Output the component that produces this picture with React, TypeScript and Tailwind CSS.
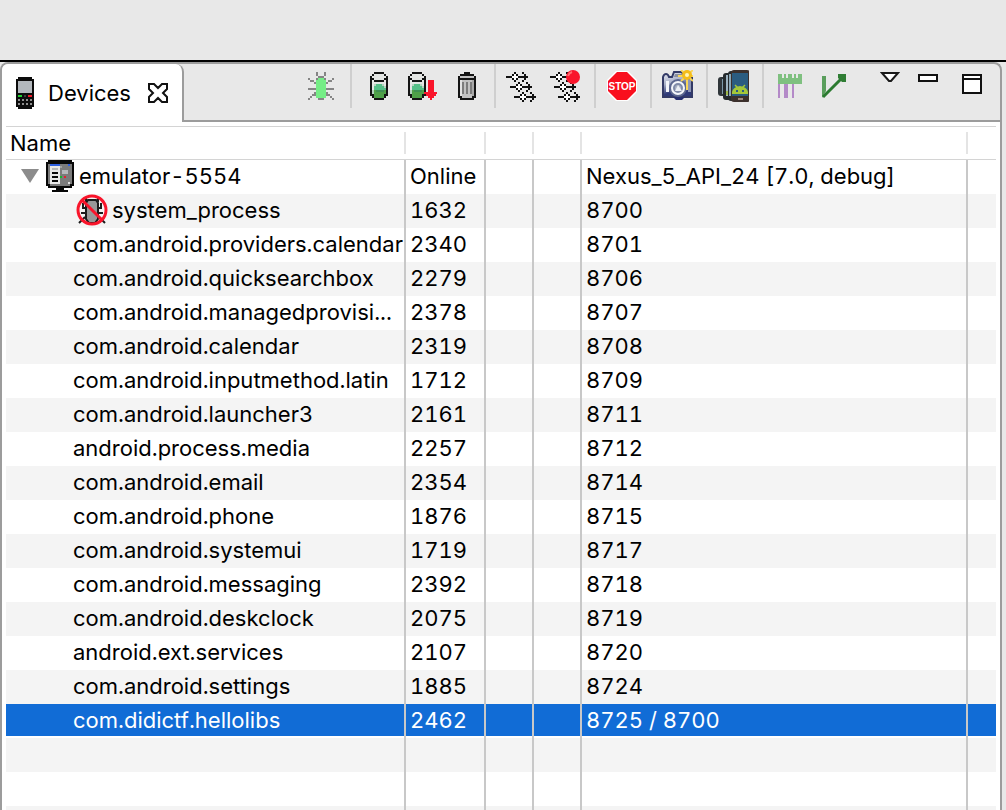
import type { ReactNode } from "react";

type Palette = Record<string, string>;

/* Draws a bitmap icon from rows of characters; every cell is 2x2 pixels. */
function Bitmap({ rows, colors, x = 0, y = 0 }: { rows: string[]; colors: Palette; x?: number; y?: number }) {
  return (
    <g transform={`translate(${x} ${y})`} shapeRendering="crispEdges">
      {rows.map((row, r) =>
        row.split("").map((c, i) =>
          colors[c] ? <rect key={`${r}-${i}`} x={i * 2} y={r * 2} width={2} height={2} fill={colors[c]} /> : null,
        ),
      )}
    </g>
  );
}

function Icon({ children }: { children: ReactNode }) {
  return (
    <svg viewBox="0 0 32 32" className="block size-8 shrink-0" aria-hidden="true">
      {children}
    </svg>
  );
}

const bug = [
  "....g...g....",
  "....g...g....",
  ".....ggg.....",
  "g...gGGGg...g",
  ".gg.GGGGG.gg.",
  "...gGGGGGg...",
  "....GGGGG....",
  "....GGGGG....",
  "ggggGGGGGgggg",
  "....GGGGG....",
  "...gGGGGGg...",
  "..ggGGGGGgg..",
  ".g..GGGGG..g.",
  "g....ggg....g",
];

const cylinder = [
  "..kkkkk..",
  ".kwwwwwk.",
  "kwwwwwwwk",
  "kkwwwwwkk",
  "kwkkkkkwk",
  "kwwwwwwwk",
  "kwlccclwk",
  "kwccccclk",
  "kwcccccck",
  "klgddddgk",
  "klggggggk",
  "kkgggggkk",
  ".kgggggk.",
  "..kkkkk..",
];
const cylinderColors = { k: "#141414", w: "#e4e6e4", l: "#b5d3bf", c: "#55bf88", g: "#4fa048", d: "#3f8f54" };

const trash = [
  "...kkk...",
  ".kkkkkkk.",
  "kgggggggk",
  "kkkkkkkkk",
  "kwgggggsk",
  "kwdgdgdsk",
  "kwdgdgdsk",
  "kwdgdgdsk",
  "kwdgdgdsk",
  "kwdgdgdsk",
  "kwdgdgdsk",
  "kwgggggsk",
  "kkgggggkk",
  ".kkkkkkk.",
];

const thread = ["....k...k..", "...kwk...k.", "kkkwwwkkkkk", "...kwk...k.", "....k...k.."];
const threadColors = { k: "#111111", w: "#ffffff" };

const handset = [
  ".kkkkkkk.",
  "kkkkkkkkk",
  "ksssssssk",
  "ksssssssk",
  "ksssssssk",
  "ksssssssk",
  "ksssssssk",
  "ksssssssk",
  "kkkkkkkkk",
  "kGGkwkRRk",
  "kkkkkkkkk",
  "kgkgkgkgk",
  "kkkkkkkkk",
  "kgkgkgkgk",
  "kkkkkkkkk",
  ".kkkkkkk.",
];

const monitor = [
  ".kkkkkkkkkkkk.",
  "kkkkkkkkkkkkkk",
  "kabbbbbaaaabak",
  "kallllldaaaaak",
  "kalssslaaaaaak",
  "kalllllasssaak",
  "kalkkklasssaak",
  "kalllllaaaaaak",
  "kalkkklGaRaaak",
  "kalllllaaaaaak",
  "kalkkklaaaaaak",
  "kalllllaaaawak",
  "kkaaaaaaaaaakk",
  ".kkkkkkkkkkkk.",
  ".....kkkk.....",
  "...kkkkkkkk...",
];

function CameraIcon() {
  return (
    <Icon>
      <defs>
        <linearGradient id="camera-body" x1="0" y1="0" x2="0.4" y2="1">
          <stop offset="0" stopColor="#eef0f6" />
          <stop offset="0.45" stopColor="#a9b0c8" />
          <stop offset="0.8" stopColor="#2f3a78" />
        </linearGradient>
      </defs>
      <path d="M2 7q1-3 3-3t3 3h3l2-5h8l2 5h8v20H2z" fill="url(#camera-body)" stroke="#333a66" strokeWidth="2" />
      <path d="M14 4h7v3h-8z" fill="#8b90a0" />
      <path d="M12 27h12l-3 3h-6z" fill="#262f70" />
      <rect x="5" y="11" width="3" height="11" fill="#f3f5fa" />
      <rect x="27" y="10" width="3" height="12" fill="#8f97b6" />
      <circle cx="17" cy="18" r="8" fill="#f4f6fa" stroke="#5c678f" strokeWidth="2" />
      <circle cx="17" cy="18" r="4" fill="#aab2c4" stroke="#7f8aa8" strokeWidth="2" />
      <path d="M14 21l3-6 4 6z" fill="#eceff4" />
      <path d="M26 0v20M17 6h15M20 0l12 11M32 0L20 11" stroke="#f8d65a" strokeWidth="2" />
      <circle cx="26" cy="5" r="5" fill="#f5bd1a" />
      <circle cx="26" cy="5" r="2" fill="#fff6b8" />
    </Icon>
  );
}

function Phones() {
  return (
    <Icon>
      <g transform="translate(1 0)">
        <rect x="0" y="7" width="14" height="19" rx="3" fill="#30363a" />
        <rect x="4" y="9" width="6" height="15" fill="#7d99aa" />
        <rect x="5" y="3" width="14" height="27" rx="3" fill="#252a2d" />
        <rect x="8" y="5" width="6" height="21" fill="#9db3c1" />
        <rect x="8" y="21" width="5" height="4" fill="#9db84a" />
        <rect x="10" y="1" width="14" height="30" rx="3" fill="#252a2d" />
        <rect x="11" y="4" width="4" height="22" fill="#8aa6b5" />
        <rect x="13" y="0" width="19" height="32" rx="3" fill="#3c302c" />
        <rect x="14" y="3" width="16" height="23" fill="#2b5c80" />
        <path d="M14 24v-2q1-5 8-6 7 1 8 6v2z" fill="#a5c739" />
        <path d="M17 15l3 3M27 15l-3 3" stroke="#a5c739" strokeWidth="1.5" />
        <path d="M18 20h2v2h-2zM24 20h2v2h-2z" fill="#2b5c80" />
        <path d="M20 28h5v2h-5z" fill="#a1887c" />
      </g>
    </Icon>
  );
}

type Tool = { label: string; icon: ReactNode };

const toolGroups: Tool[][] = [
  [{ label: "Debug", icon: <Icon><Bitmap x={3} y={2} rows={bug} colors={{ g: "#858585", G: "#75ed86" }} /></Icon> }],
  [
    { label: "Update heap", icon: <Icon><Bitmap x={9} y={2} rows={cylinder} colors={cylinderColors} /></Icon> },
    {
      label: "Dump HPROF file",
      icon: (
        <Icon>
          <Bitmap x={3} y={2} rows={cylinder} colors={cylinderColors} />
          <path d="M23 10h6v12h4v2h-2v2h-2v2h-2v2h-2v-2h-2v-2h-2v-2h-2v-2h4z" fill="#f9152b" shapeRendering="crispEdges" />
        </Icon>
      ),
    },
    {
      label: "Cause GC",
      icon: <Icon><Bitmap x={9} y={2} rows={trash} colors={{ k: "#141414", g: "#c2c2c2", d: "#7c7c7c", w: "#e2e2e2", s: "#a8a8a8" }} /></Icon>,
    },
  ],
  [
    {
      label: "Update threads",
      icon: (
        <Icon>
          {[0, 1, 2].map((n) => <Bitmap key={n} x={1 + n * 4} y={2 + n * 10} rows={thread} colors={threadColors} />)}
        </Icon>
      ),
    },
    {
      label: "Start method profiling",
      icon: (
        <Icon>
          {[0, 1, 2].map((n) => <Bitmap key={n} x={1 + n * 4} y={2 + n * 10} rows={thread} colors={threadColors} />)}
          <circle cx="24" cy="7" r="7" fill="#f9152b" />
          <path d="M19 6q1-3 4-4" stroke="#ff6b70" strokeWidth="2" fill="none" />
        </Icon>
      ),
    },
  ],
  [
    {
      label: "Stop process",
      icon: (
        <Icon>
          <path d="M11 1h12l9 9v12l-9 9H11l-9-9V10z" fill="#ffffff" />
          <path d="M12 2h10l9 9v10l-9 9H12l-9-9V11z" fill="#f90f1e" />
          <text x="17" y="20" textAnchor="middle" fontFamily="Liberation Sans, sans-serif" fontWeight="700" fontSize="10" fill="#ffffff">
            STOP
          </text>
        </Icon>
      ),
    },
  ],
  [{ label: "Screen capture", icon: <CameraIcon /> }],
  [{ label: "Dump view hierarchy", icon: <Phones /> }],
  [
    {
      label: "Capture system trace",
      icon: (
        <Icon>
          <g shapeRendering="crispEdges">
            <path d="M5 12h2v16H5zM11 13h4v15h-4zM19 13h2v15h-2z" fill="#b48ac8" />
            <path d="M5 4h4v4h2V4h2v4h2V4h4v4h2V4h2v4h2V4h4v10H5z" fill="#7fc080" />
          </g>
        </Icon>
      ),
    },
    {
      label: "Start OpenGL trace",
      icon: (
        <Icon>
          <path d="M5 6h4v15l-4 7z" fill="#5a9e5c" />
          <path d="M6 27L25 8" stroke="#2b7a30" strokeWidth="3" />
          <path d="M21 4h8v8h-4l-4-4z" fill="#2f7d34" />
        </Icon>
      ),
    },
  ],
];

function EmulatorIcon() {
  return (
    <svg viewBox="0 0 28 32" className="block h-8 w-7 shrink-0" aria-hidden="true">
      <Bitmap
        rows={monitor}
        colors={{ k: "#080808", b: "#2d5fe0", l: "#e8e8e8", d: "#a0a0a0", a: "#7b7b7b", s: "#b5b8bb", G: "#17b52a", R: "#e8202c", w: "#dddddd" }}
      />
    </svg>
  );
}

function NoDebugIcon() {
  return (
    <Icon>
      <path d="M10 3v4h3M22 3v4h-3M7 9v5h4M25 9v5h-4M5 19h22M9 23l-6 6M23 23l6 6" stroke="#1c1c1c" strokeWidth="2" fill="none" />
      <path d="M12 6h8l2 3v16l-3 4h-6l-3-4V9z" fill="#989898" stroke="#1c1c1c" strokeWidth="2" />
      <circle cx="16" cy="16" r="14" fill="none" stroke="#f9152b" strokeWidth="3" />
      <path d="M6 6l20 20" stroke="#f9152b" strokeWidth="3" />
    </Icon>
  );
}

type Row = { name: string; pid: string; port: string; kind?: "device" | "blocked" | "selected" | "empty" };

const rows: Row[] = [
  { name: "emulator-5554", pid: "Online", port: "Nexus_5_API_24 [7.0, debug]", kind: "device" },
  { name: "system_process", pid: "1632", port: "8700", kind: "blocked" },
  { name: "com.android.providers.calendar", pid: "2340", port: "8701" },
  { name: "com.android.quicksearchbox", pid: "2279", port: "8706" },
  { name: "com.android.managedprovisi...", pid: "2378", port: "8707" },
  { name: "com.android.calendar", pid: "2319", port: "8708" },
  { name: "com.android.inputmethod.latin", pid: "1712", port: "8709" },
  { name: "com.android.launcher3", pid: "2161", port: "8711" },
  { name: "android.process.media", pid: "2257", port: "8712" },
  { name: "com.android.email", pid: "2354", port: "8714" },
  { name: "com.android.phone", pid: "1876", port: "8715" },
  { name: "com.android.systemui", pid: "1719", port: "8717" },
  { name: "com.android.messaging", pid: "2392", port: "8718" },
  { name: "com.android.deskclock", pid: "2075", port: "8719" },
  { name: "android.ext.services", pid: "2107", port: "8720" },
  { name: "com.android.settings", pid: "1885", port: "8724" },
  { name: "com.didictf.hellolibs", pid: "2462", port: "8725 / 8700", kind: "selected" },
  { name: "", pid: "", port: "", kind: "empty" },
  { name: "", pid: "", port: "", kind: "empty" },
  { name: "", pid: "", port: "", kind: "empty" },
];

function NameCell({ row }: { row: Row }) {
  if (row.kind === "device") {
    return (
      <div className="flex items-center pl-[15px]">
        <button type="button" aria-label="Collapse" className="mr-[7px]">
          <svg viewBox="0 0 18 14" className="block h-[14px] w-[18px]" aria-hidden="true">
            <path d="M0 0h18L9 14z" fill="#8c8c8c" />
          </svg>
        </button>
        <EmulatorIcon />
        <span className="pl-[5px]">{row.name}</span>
      </div>
    );
  }
  if (row.kind === "blocked") {
    return (
      <div className="flex items-center pl-[70px]">
        <NoDebugIcon />
        <span className="pl-1">{row.name}</span>
      </div>
    );
  }
  return <div className="pl-[67px]">{row.name}</div>;
}

function DeviceTable() {
  const cell = "h-[34px] border-r-2 border-[#c8c8c8] p-0 align-top whitespace-nowrap";
  return (
    <table className="w-full table-fixed border-separate border-spacing-0 border-t border-[#d4d4d4] text-left text-[22px] leading-8 tabular-nums">
      <colgroup>
        <col className="w-[400px]" />
        <col className="w-20" />
        <col className="w-12" />
        <col className="w-12" />
        <col />
        <col className="w-7" />
      </colgroup>
      <thead>
        <tr>
          {["Name", "", "", "", "", ""].map((title, i) => (
            <th key={i} scope="col" className="h-[33px] border-b border-[#d4d4d4] p-0 pb-px font-normal">
              <div className={i < 5 ? "flex h-[22px] items-center border-r-2 border-[#e4e4e4] pl-1" : "h-[22px]"}>{title}</div>
            </th>
          ))}
        </tr>
      </thead>
      <tbody>
        {rows.map((row, i) => {
          const selected = row.kind === "selected";
          const tone = selected ? "bg-[#116cd6] text-white" : i % 2 ? "bg-[#f4f4f4]" : "bg-white";
          const edge = selected ? "shadow-[inset_0_-2px_0_#ffffff]" : "";
          return (
            <tr key={i} className={tone} aria-selected={selected}>
              <td className={`${cell} ${edge}`}>
                <NameCell row={row} />
              </td>
              <td className={`${cell} ${edge}`}>{row.pid && <span className="pl-1">{row.pid}</span>}</td>
              <td className={`${cell} ${edge}`} />
              <td className={`${cell} ${edge}`} />
              <td className={`${cell} ${edge}`}>{row.port && <span className="pl-1">{row.port}</span>}</td>
              <td className={`h-[34px] p-0 ${edge}`} />
            </tr>
          );
        })}
      </tbody>
    </table>
  );
}

export default function App() {
  return (
    <main className="flex h-screen flex-col overflow-hidden bg-[#e8e8e8] pt-[60px] font-['Inter','Noto_Sans',sans-serif] text-black">
      <div className="h-[2px] shrink-0 bg-black" />
      <section className="mr-1 flex min-h-0 flex-1 flex-col overflow-hidden rounded-t-lg border-x-2 border-t-2 border-[#9c9c9c]">
        <header className="flex h-[58px] shrink-0">
          <div className="flex w-[182px] shrink-0 items-center rounded-tr-lg border-r-2 border-[#9c9c9c] bg-white pl-[14px]">
            <svg viewBox="0 0 18 32" className="h-8 w-[18px]" aria-hidden="true">
              <Bitmap rows={handset} colors={{ k: "#0c0c0c", s: "#b3b8bd", G: "#1fd12f", R: "#f01a28", g: "#8f8f8f", w: "#3a3a3a" }} />
            </svg>
            <h1 className="ml-[14px] text-[22px] leading-8">Devices</h1>
            <button type="button" aria-label="Close Devices" className="mr-[14px] ml-auto">
              <svg viewBox="0 0 20 20" className="block size-5" aria-hidden="true">
                <path d="M1 1h5l4 4 4-4h5v5l-4 4 4 4v5h-5l-4-4-4 4H1v-5l4-4-4-4z" fill="#ffffff" stroke="#111111" strokeWidth="2" />
              </svg>
            </button>
          </div>
          <div className="flex flex-1 items-start justify-end border-b-2 border-[#9c9c9c] pr-[18px]">
            {toolGroups.map((group, i) => (
              <div key={i} className="flex">
                {i > 0 && <div className="mr-[3px] ml-[7px] h-11 w-[2px] bg-[#cfcfcf]" />}
                {group.map((tool) => (
                  <button key={tool.label} type="button" aria-label={tool.label} className="flex h-11 w-11 items-center justify-center">
                    {tool.icon}
                  </button>
                ))}
              </div>
            ))}
            <button type="button" aria-label="View menu" className="mt-2 ml-[25px]">
              <svg viewBox="0 0 20 10" className="block h-[10px] w-5" aria-hidden="true">
                <path d="M2 1h16l-7 8H9z" fill="#ffffff" stroke="#1a1a1a" strokeWidth="2" />
              </svg>
            </button>
            <button type="button" aria-label="Minimize" className="mt-[10px] ml-[18px]">
              <svg viewBox="0 0 20 8" className="block h-2 w-5" aria-hidden="true">
                <path d="M1 1h18v6H1z" fill="#ffffff" stroke="#111111" strokeWidth="2" />
              </svg>
            </button>
            <button type="button" aria-label="Maximize" className="mt-[10px] ml-6">
              <svg viewBox="0 0 20 20" className="block size-5" aria-hidden="true">
                <path d="M1 1h18v18H1z" fill="#ffffff" stroke="#111111" strokeWidth="2" />
                <path d="M2 5h16" stroke="#111111" strokeWidth="2" />
              </svg>
            </button>
          </div>
        </header>
        <div className="min-h-0 flex-1 overflow-hidden bg-white px-1 pt-1">
          <DeviceTable />
        </div>
      </section>
    </main>
  );
}
